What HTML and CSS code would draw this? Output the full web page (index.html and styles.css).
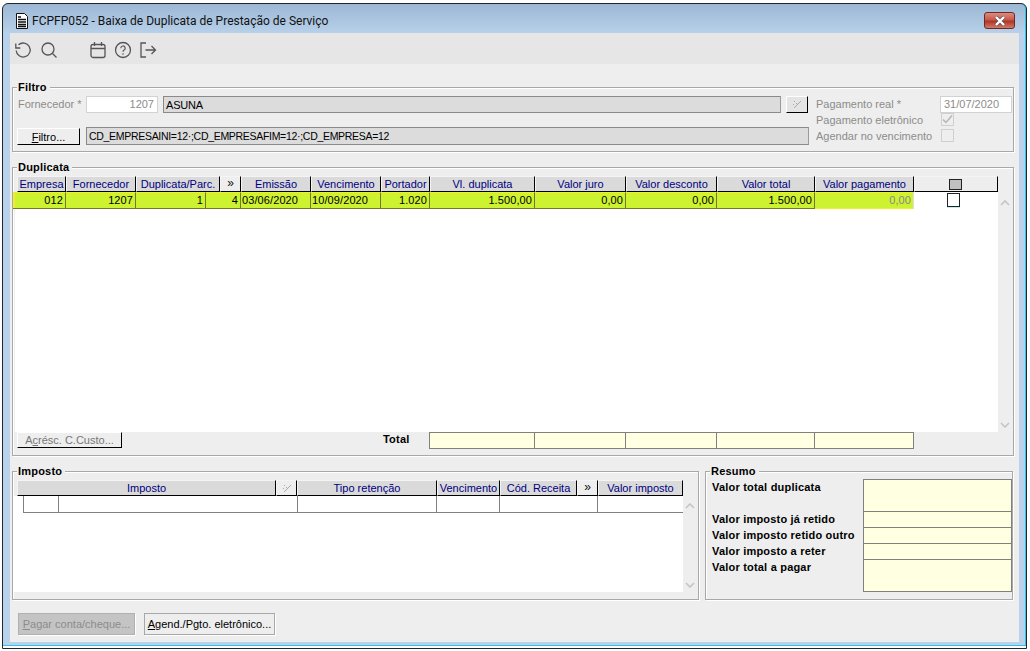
FILE: index.html
```html
<!DOCTYPE html>
<html lang="pt-BR">
<head>
<meta charset="utf-8">
<title>FCPFP052 - Baixa de Duplicata de Prestação de Serviço</title>
<link rel="stylesheet" href="styles.css">
</head>
<body>
<div class="window">
  <header class="titlebar">
    <svg class="doc-icon" width="14" height="16" viewBox="0 0 14 16"><path d="M1.5.5h8l3 3v12h-11z" fill="#fff" stroke="#111"/><path d="M3 4h3M3 6.500h8M3 9h8M3 11.500h8M3 13.500h8" stroke="#111" stroke-width="1.400"/></svg>
    <span class="title">FCPFP052 - Baixa de Duplicata de Prestação de Serviço</span>
    <span class="close"><svg width="14" height="10" viewBox="0 0 14 10"><path d="M3 1l8 8M11 1L3 9" stroke="#555" stroke-width="3.600"/><path d="M3 1l8 8M11 1L3 9" stroke="#fff" stroke-width="2.400"/></svg></span>
  </header>
  <main class="client">
    <nav class="toolbar">
      <svg class="tool" width="18" height="18" viewBox="0 0 18 18"><path d="M4.500 3.800A7 7 0 1 1 2.200 9.500M1.800 2.500v4.500h4.500" fill="none" stroke="#555" stroke-width="1.300"/></svg>
      <svg class="tool search" width="18" height="18" viewBox="0 0 18 18"><circle cx="8" cy="8" r="6" fill="none" stroke="#555" stroke-width="1.300"/><path d="M12.500 12.500l4 4" stroke="#555" stroke-width="1.300"/></svg>
      <svg class="tool cal" width="18" height="18" viewBox="0 0 18 18"><rect x="2" y="3.500" width="14" height="13" rx="2" fill="none" stroke="#555" stroke-width="1.300"/><path d="M2 7.500h14M5.500 1v4M12.500 1v4" stroke="#555" stroke-width="1.300"/></svg>
      <svg class="tool help" width="18" height="18" viewBox="0 0 18 18"><circle cx="9" cy="9" r="7.500" fill="none" stroke="#555" stroke-width="1.300"/><path d="M6.800 7.200a2.200 2.200 0 1 1 3.300 1.900c-.8.500-1.100.9-1.100 1.700" fill="none" stroke="#555" stroke-width="1.200"/><path d="M9 12.300v1.500" stroke="#555" stroke-width="1.200"/></svg>
      <svg class="tool exit" width="18" height="18" viewBox="0 0 18 18"><path d="M7 2H2v14h5M6.500 9h10M12.500 5l4 4-4 4" fill="none" stroke="#555" stroke-width="1.300"/></svg>
    </nav>

    <section class="group filtro">
      <span class="legend">Filtro</span>
      <div class="filtro-main">
        <div class="filtro-row">
          <label class="field-label">Fornecedor *</label>
          <span class="input code">1207</span>
          <span class="readonly name">ASUNA</span>
          <span class="lookup"><svg width="10" height="9" viewBox="0 0 10 9"><path d="M2 1h1v1H2zM4 3h1v1H4zM1 4h1v1H1zM8 1h1v1H8zM7 2h1v1H7zM6 3h1v1H6zM5 4h1v1H5zM4 5h1v1H4zM3 6h1v1H3zM2 7h1v1H2z" fill="#aaa"/></svg></span>
        </div>
        <div class="filtro-row second">
          <button class="btn filtro-btn"><u>F</u>iltro...</button>
          <span class="readonly expr">CD_EMPRESAINI=12·;CD_EMPRESAFIM=12·;CD_EMPRESA=12</span>
        </div>
      </div>
      <div class="filtro-side">
        <div class="side-row date-row"><label class="field-label">Pagamento real *</label><span class="input date">31/07/2020</span></div>
        <div class="side-row"><label class="field-label">Pagamento eletrônico</label><span class="check"><svg width="13" height="13" viewBox="0 0 13 13"><path d="M2 6.500l3 3 6-7" fill="none" stroke="#b5b5b5" stroke-width="1.500"/></svg></span></div>
        <div class="side-row"><label class="field-label">Agendar no vencimento</label><span class="check"></span></div>
      </div>
    </section>

    <section class="group duplicata">
      <span class="legend">Duplicata</span>
      <div class="thead dup-head">
        <span class="th">Empresa</span><span class="th">Fornecedor</span><span class="th">Duplicata/Parc.</span><span class="th more">»</span><span class="th">Emissão</span><span class="th">Vencimento</span><span class="th">Portador</span><span class="th">Vl. duplicata</span><span class="th">Valor juro</span><span class="th">Valor desconto</span><span class="th">Valor total</span><span class="th">Valor pagamento</span><span class="th selector"><i class="sel-box"></i></span>
      </div>
      <div class="grid-wrap">
        <div class="grid-white dup-white">
          <div class="dup-row">
            <span class="td">012</span><span class="td">1207</span><span class="td">1</span><span class="td">4</span><span class="td left">03/06/2020</span><span class="td left">10/09/2020</span><span class="td">1.020</span><span class="td">1.500,00</span><span class="td">0,00</span><span class="td">0,00</span><span class="td">1.500,00</span><span class="td pay">0,00</span><span class="td-check"><i class="row-check"></i></span>
          </div>
        </div>
        <div class="scroll dup-scroll">
          <svg width="10" height="6" viewBox="0 0 10 6"><path d="M1 5l4-4 4 4" fill="none" stroke="#c4c4c4" stroke-width="1.600"/></svg>
          <svg width="10" height="6" viewBox="0 0 10 6"><path d="M1 1l4 4 4-4" fill="none" stroke="#c4c4c4" stroke-width="1.600"/></svg>
        </div>
      </div>
      <div class="dup-foot">
        <button class="btn acresc">A<u>c</u>résc. C.Custo...</button>
        <span class="total-label">Total</span>
        <div class="totals"><span class="tot"></span><span class="tot"></span><span class="tot"></span><span class="tot"></span><span class="tot"></span></div>
      </div>
    </section>

    <div class="lower">
      <section class="group imposto">
        <span class="legend">Imposto</span>
        <div class="thead imp-head">
          <span class="th">Imposto</span><span class="th more wand-cell"><svg width="10" height="9" viewBox="0 0 10 9"><path d="M2 1h1v1H2zM4 3h1v1H4zM1 4h1v1H1zM8 1h1v1H8zM7 2h1v1H7zM6 3h1v1H6zM5 4h1v1H5zM4 5h1v1H4zM3 6h1v1H3zM2 7h1v1H2z" fill="#aaa"/></svg></span><span class="th">Tipo retenção</span><span class="th">Vencimento</span><span class="th">Cód. Receita</span><span class="th more">»</span><span class="th">Valor imposto</span>
        </div>
        <div class="grid-wrap">
          <div class="grid-white imp-white">
            <div class="imp-row"><span class="cell"></span><span class="cell"></span><span class="cell"></span><span class="cell"></span><span class="cell"></span><span class="cell"></span></div>
          </div>
          <div class="scroll imp-scroll">
            <svg width="10" height="6" viewBox="0 0 10 6"><path d="M1 5l4-4 4 4" fill="none" stroke="#c4c4c4" stroke-width="1.600"/></svg>
            <svg width="10" height="6" viewBox="0 0 10 6"><path d="M1 1l4 4 4-4" fill="none" stroke="#c4c4c4" stroke-width="1.600"/></svg>
          </div>
        </div>
      </section>
      <section class="group resumo">
        <span class="legend">Resumo</span>
        <div class="resumo-grid">
          <span class="res-label">Valor total duplicata</span><span class="res-box"></span>
          <span class="res-label">Valor imposto já retido</span><span class="res-box"></span>
          <span class="res-label">Valor imposto retido outro</span><span class="res-box"></span>
          <span class="res-label">Valor imposto a reter</span><span class="res-box"></span>
          <span class="res-label">Valor total a pagar</span><span class="res-box"></span>
        </div>
      </section>
    </div>

    <footer class="actions">
      <button class="flat disabled"><u>P</u>agar conta/cheque...</button>
      <button class="flat"><u>A</u>gend./Pgto. eletrônico...</button>
    </footer>
  </main>
</div>
</body>
</html>
```
FILE: styles.css
```css
* { box-sizing: border-box; }
html, body { margin: 0; height: 651px; overflow: hidden; background: #fff; }
body { font: 11px "Liberation Sans", Arial, sans-serif; color: #000; }
u { text-underline-offset: 1px; }
i { font-style: normal; }

.window {
  margin: 3px 3px 0 2px;
  height: 646px;
  border: 1px solid #20262c;
  border-radius: 6px 6px 0 0;
  background: linear-gradient(#9cb8d5, #b9d1ea 30px);
  padding: 0 7px 6px 7px;
  box-shadow: inset 0 -2px 0 #fff, inset 0 -3px 0 #2cc4e6, inset -1px 0 0 #2cc4e6;
  display: flex;
  flex-direction: column;
}
.titlebar { height: 29px; flex: none; display: flex; align-items: center; padding: 5px 4px 0 5px; }
.doc-icon { flex: none; }
.title { margin-left: 3px; font: 12px Roboto, sans-serif; color: #111; white-space: nowrap; flex: 1; }
.close {
  width: 31px; height: 17px; display: flex; align-items: center; justify-content: center;
  border: 1px solid #6b2a2a; border-radius: 3px;
  background: linear-gradient(#d98d80, #c9584a 45%, #b23424 55%, #cb7d6c);
  margin-bottom: 1px;
}

.client { flex: 1; background: #eee; display: flex; flex-direction: column; padding-left: 2px; padding-right: 5px; }
.toolbar { flex: none; height: 31px; margin: 0 -5px 0 -2px; background: #e6e6e6; display: flex; align-items: center; padding: 2px 0 0 4px; }
.tool { flex: none; }
.search { margin-left: 8px; }
.cal { margin-left: 31px; }
.help { margin-left: 7px; }
.exit { margin-left: 7px; }

.group { position: relative; border: 1px solid #a8a8a8; box-shadow: 1px 1px 0 #fff, inset 1px 1px 0 #fff; flex: none; }
.legend { position: absolute; left: 4px; top: -8px; padding: 0 3px 0 1px; background: #eee; font-weight: bold; line-height: 14px; letter-spacing: .2px; }

/* Filtro */
.filtro { margin-top: 23px; height: 65px; display: flex; padding: 8px 0 0 4px; }
.filtro-main { width: 792px; flex: none; }
.filtro-row { display: flex; align-items: center; height: 17px; }
.filtro-row.second { margin-top: 14px; height: 18px; }
.field-label { color: #8c8c8c; white-space: nowrap; }
.filtro-row .field-label { width: 69px; padding: 0 0 2px 1px; flex: none; }
.date-row .field-label { padding-bottom: 2px; }
.input { height: 17px; background: #fff; border: 1px solid #d2d2d2; color: #8c8c8c; line-height: 15px; padding: 0 3px; flex: none; }
.code { width: 72px; text-align: right; }
.readonly { background: #dcdcdc; border: 1px solid #8a8a8a; border-right-color: #9a9a9a; height: 100%; line-height: 16px; padding: 0 2px; white-space: nowrap; flex: none; }
.name { width: 618px; margin-left: 5px; letter-spacing: -.2px; }
.lookup { width: 22px; height: 17px; margin-left: 5px; background: #e4e4e4; border: 1px solid; border-color: #fff #000 #000 #fff; display: flex; align-items: center; justify-content: center; }
.btn { font: inherit; background: #eee; padding: 0; border: 1px solid; border-color: #fff #000 #000 #fff; cursor: default; }
.filtro-btn { width: 63px; height: 17px; margin-top: 1px; }
.expr { width: 723px; margin-left: 6px; font-size: 10.500px; letter-spacing: -.3px; }
.filtro-side { margin-left: 7px; width: 196px; flex: none; }
.side-row { display: flex; align-items: center; height: 13px; margin-bottom: 3px; }
.side-row .field-label { width: 125px; flex: none; }
.date-row { height: 17px; margin-bottom: 0; }
.side-row .input { margin-left: -1px; }
.date { width: 72px; padding-left: 3px; }
.check { width: 13px; height: 13px; border: 1px solid #cfcfcf; background: #eee; display: block; flex: none; line-height: 0; }
.check svg { margin: -1px; }

/* Tables */
.thead { display: grid; height: 16px; }
.th { background: #dadada; color: #000080; text-align: center; line-height: 15px; white-space: nowrap; overflow: hidden; border: 1px solid; border-color: #f4f4f4 #000 #000 #f4f4f4; }
.th.more { background: #eee; color: #111; font-size: 12px; line-height: 12px; }
.th.wand-cell { display: flex; align-items: center; justify-content: center; }
.selector { background: #eee; display: flex; align-items: center; justify-content: center; padding-right: 2px; }
.sel-box { width: 13px; height: 11px; background: #c0c0c0; border: 1px solid #222; }
.grid-wrap { display: flex; }
.grid-white { background: #fff; }
.scroll { flex: none; display: flex; flex-direction: column; align-items: center; justify-content: space-between; }

/* Duplicata */
.duplicata { margin-top: 15px; height: 289px; padding: 8px 0 0 4px; }
.dup-head { grid-template-columns: 49px 70px 84px 21px 70px 70px 49px 105px 91px 91px 98px 99px 84px; }
.grid-wrap { margin-left: -2px; }
.dup-white { width: 983px; height: 240px; }
.dup-scroll { width: 14px; height: 240px; padding: 8px 0 4px; }
.dup-row { display: grid; height: 17px; margin-left: -2px; grid-template-columns: 53px 70px 70px 35px 70px 70px 49px 105px 91px 91px 98px 99px 84px; }
.td { background: #cdf22f; border-top: 1px solid #f0ee30; border-bottom: 1px solid #77772c; border-right: 1px solid #77772c; text-align: right; padding-right: 2px; line-height: 14px; white-space: nowrap; letter-spacing: .1px; }
.td:first-child { box-shadow: inset 2px 0 0 #f0ee30; }
.td.left { text-align: left; padding-left: 1px; }
.td.pay { color: #888; border-color: #f0ee30; border-right-color: #dde; }
.td-check { display: flex; justify-content: center; background: #fff; padding: 1px 5px 0 0; }
.row-check { display: block; width: 13px; height: 14px; border: 1px solid #222; background: #fff; box-shadow: 0 1px 0 #bfeaf6; }
.dup-foot { display: flex; align-items: flex-start; height: 17px; }
.acresc { width: 105px; height: 16px; color: #777; }
.total-label { margin-left: 261px; width: 46px; font-weight: bold; line-height: 14px; letter-spacing: .2px; }
.totals { display: grid; grid-template-columns: 105px 91px 91px 98px 99px; height: 17px; border: 1px solid #808080; border-left: none; background: #ffffe2; }
.tot { border-left: 1px solid #808080; }

/* Lower */
.lower { display: flex; gap: 6px; margin-top: 15px; flex: none; }
.imposto { width: 687px; height: 129px; padding: 8px 0 0 4px; }
.imp-head { height: 16px; grid-template-columns: 259px 21px 140px 63px 77px 21px 85px; }
.imposto .grid-wrap { margin-left: -4px; }
.imp-white { width: 670px; height: 96px; padding-left: 10px; }
.imp-scroll { width: 14px; height: 96px; padding: 7px 0 4px; }
.imp-row { display: grid; height: 17px; grid-template-columns: 35px 239px 139px 63px 98px 86px; border-left: 1px solid #808080; border-bottom: 1px solid #808080; }
.cell { border-right: 1px solid #808080; }
.cell:last-child { border-right: none; }

.resumo { width: 308px; height: 129px; padding: 7px 0 0 6px; }
.resumo-grid { display: grid; grid-template-columns: 151px 149px; grid-template-rows: 32px 16px 16px 16px 33px; }
.res-label { font-weight: bold; letter-spacing: .2px; line-height: 15px; padding-top: 1px; white-space: nowrap; }
.res-box { background: #ffffe2; border: 1px solid #808080; margin-bottom: -1px; }
.res-box:last-child { margin-bottom: 0; }

/* Actions */
.actions { display: flex; gap: 9px; padding: 13px 0 0 6px; }
.flat { font: inherit; white-space: nowrap; width: 131px; height: 22px; padding: 0; background: #eee; border: 1px solid #a8a8a8; box-shadow: 1px 1px 0 #fff; }
.flat.disabled { width: 117px; background: #c4c4c4; color: #8c8c8c; border-color: #b0b0b0; }
```
